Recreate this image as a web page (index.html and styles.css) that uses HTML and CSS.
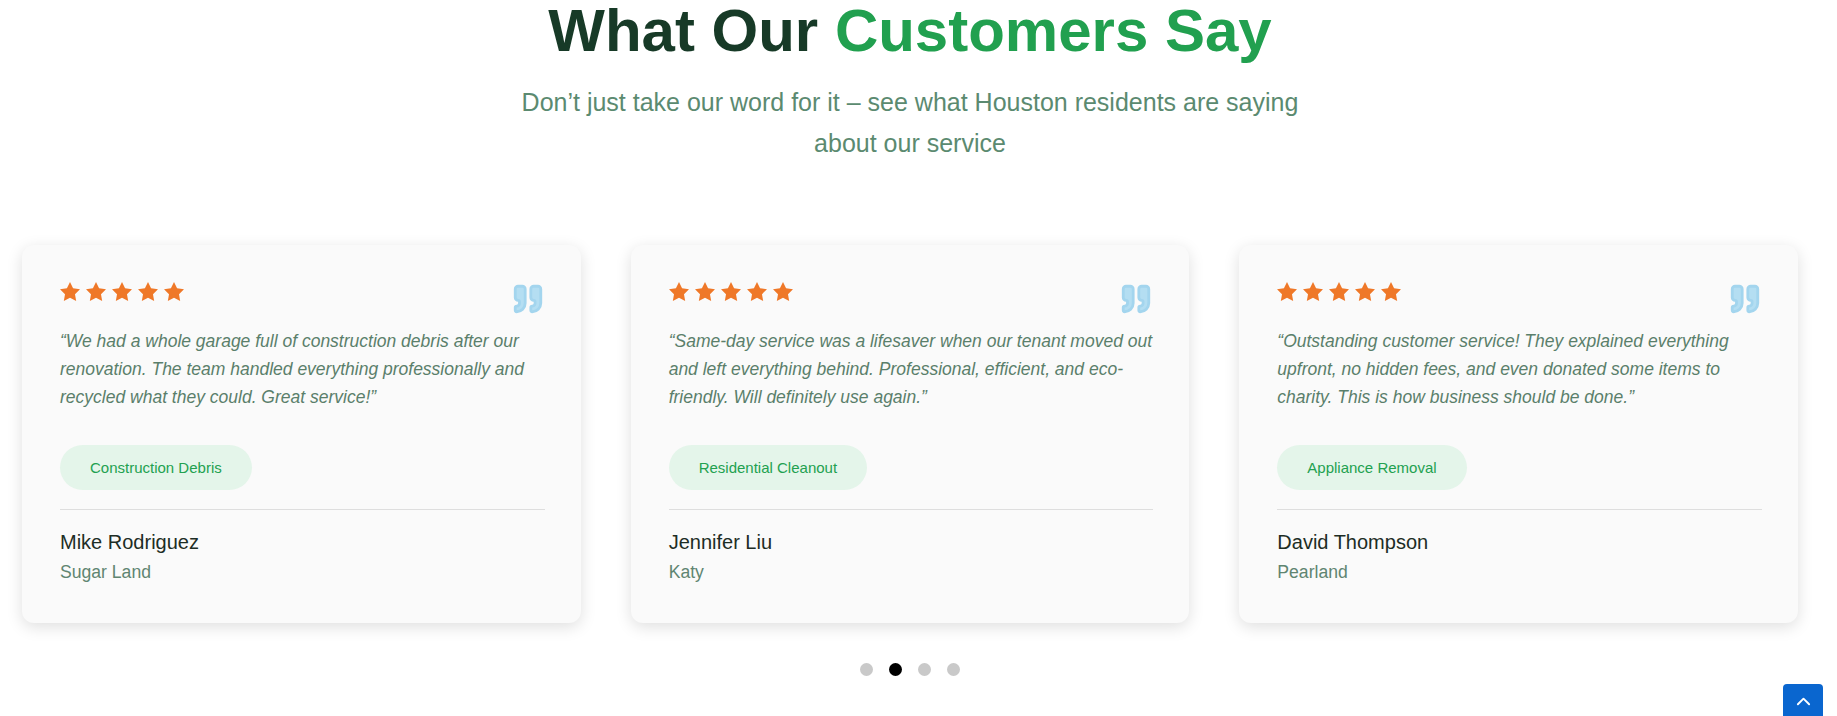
FILE: index.html
```html
<!DOCTYPE html>
<html lang="en">
<head>
<meta charset="utf-8">
<title>What Our Customers Say</title>
<link rel="stylesheet" href="styles.css">
</head>
<body>
<section class="testimonials">
  <header class="section-head">
    <h2 class="title">What Our <span class="accent">Customers Say</span></h2>
    <p class="subtitle">Don’t just take our word for it – see what Houston residents are saying about our service</p>
  </header>

  <div class="slider">
    <article class="card">
      <div class="card-head">
        <div class="stars">
          <svg class="star" viewBox="2 2 20 19.02"><polygon points="12 2 15.09 8.26 22 9.27 17 14.14 18.18 21.02 12 17.77 5.82 21.02 7 14.14 2 9.27 8.91 8.26"/></svg>
          <svg class="star" viewBox="2 2 20 19.02"><polygon points="12 2 15.09 8.26 22 9.27 17 14.14 18.18 21.02 12 17.77 5.82 21.02 7 14.14 2 9.27 8.91 8.26"/></svg>
          <svg class="star" viewBox="2 2 20 19.02"><polygon points="12 2 15.09 8.26 22 9.27 17 14.14 18.18 21.02 12 17.77 5.82 21.02 7 14.14 2 9.27 8.91 8.26"/></svg>
          <svg class="star" viewBox="2 2 20 19.02"><polygon points="12 2 15.09 8.26 22 9.27 17 14.14 18.18 21.02 12 17.77 5.82 21.02 7 14.14 2 9.27 8.91 8.26"/></svg>
          <svg class="star" viewBox="2 2 20 19.02"><polygon points="12 2 15.09 8.26 22 9.27 17 14.14 18.18 21.02 12 17.77 5.82 21.02 7 14.14 2 9.27 8.91 8.26"/></svg>
        </div>
        <svg class="quote-icon" viewBox="0 0 24 24"><path d="M16 3a2 2 0 0 0-2 2v6a2 2 0 0 0 2 2 1 1 0 0 1 1 1v1a2 2 0 0 1-2 2 1 1 0 0 0-1 1v2a1 1 0 0 0 1 1 6 6 0 0 0 6-6V5a2 2 0 0 0-2-2z"/><path d="M5 3a2 2 0 0 0-2 2v6a2 2 0 0 0 2 2 1 1 0 0 1 1 1v1a2 2 0 0 1-2 2 1 1 0 0 0-1 1v2a1 1 0 0 0 1 1 6 6 0 0 0 6-6V5a2 2 0 0 0-2-2z"/></svg>
      </div>
      <p class="quote">“We had a whole garage full of construction debris after our renovation. The team handled everything professionally and recycled what they could. Great service!”</p>
      <span class="tag">Construction Debris</span>
      <div class="author">
        <div class="name">Mike Rodriguez</div>
        <div class="place">Sugar Land</div>
      </div>
    </article>

    <article class="card">
      <div class="card-head">
        <div class="stars">
          <svg class="star" viewBox="2 2 20 19.02"><polygon points="12 2 15.09 8.26 22 9.27 17 14.14 18.18 21.02 12 17.77 5.82 21.02 7 14.14 2 9.27 8.91 8.26"/></svg>
          <svg class="star" viewBox="2 2 20 19.02"><polygon points="12 2 15.09 8.26 22 9.27 17 14.14 18.18 21.02 12 17.77 5.82 21.02 7 14.14 2 9.27 8.91 8.26"/></svg>
          <svg class="star" viewBox="2 2 20 19.02"><polygon points="12 2 15.09 8.26 22 9.27 17 14.14 18.18 21.02 12 17.77 5.82 21.02 7 14.14 2 9.27 8.91 8.26"/></svg>
          <svg class="star" viewBox="2 2 20 19.02"><polygon points="12 2 15.09 8.26 22 9.27 17 14.14 18.18 21.02 12 17.77 5.82 21.02 7 14.14 2 9.27 8.91 8.26"/></svg>
          <svg class="star" viewBox="2 2 20 19.02"><polygon points="12 2 15.09 8.26 22 9.27 17 14.14 18.18 21.02 12 17.77 5.82 21.02 7 14.14 2 9.27 8.91 8.26"/></svg>
        </div>
        <svg class="quote-icon" viewBox="0 0 24 24"><path d="M16 3a2 2 0 0 0-2 2v6a2 2 0 0 0 2 2 1 1 0 0 1 1 1v1a2 2 0 0 1-2 2 1 1 0 0 0-1 1v2a1 1 0 0 0 1 1 6 6 0 0 0 6-6V5a2 2 0 0 0-2-2z"/><path d="M5 3a2 2 0 0 0-2 2v6a2 2 0 0 0 2 2 1 1 0 0 1 1 1v1a2 2 0 0 1-2 2 1 1 0 0 0-1 1v2a1 1 0 0 0 1 1 6 6 0 0 0 6-6V5a2 2 0 0 0-2-2z"/></svg>
      </div>
      <p class="quote">“Same-day service was a lifesaver when our tenant moved out and left everything behind. Professional, efficient, and eco-friendly. Will definitely use again.”</p>
      <span class="tag">Residential Cleanout</span>
      <div class="author">
        <div class="name">Jennifer Liu</div>
        <div class="place">Katy</div>
      </div>
    </article>

    <article class="card">
      <div class="card-head">
        <div class="stars">
          <svg class="star" viewBox="2 2 20 19.02"><polygon points="12 2 15.09 8.26 22 9.27 17 14.14 18.18 21.02 12 17.77 5.82 21.02 7 14.14 2 9.27 8.91 8.26"/></svg>
          <svg class="star" viewBox="2 2 20 19.02"><polygon points="12 2 15.09 8.26 22 9.27 17 14.14 18.18 21.02 12 17.77 5.82 21.02 7 14.14 2 9.27 8.91 8.26"/></svg>
          <svg class="star" viewBox="2 2 20 19.02"><polygon points="12 2 15.09 8.26 22 9.27 17 14.14 18.18 21.02 12 17.77 5.82 21.02 7 14.14 2 9.27 8.91 8.26"/></svg>
          <svg class="star" viewBox="2 2 20 19.02"><polygon points="12 2 15.09 8.26 22 9.27 17 14.14 18.18 21.02 12 17.77 5.82 21.02 7 14.14 2 9.27 8.91 8.26"/></svg>
          <svg class="star" viewBox="2 2 20 19.02"><polygon points="12 2 15.09 8.26 22 9.27 17 14.14 18.18 21.02 12 17.77 5.82 21.02 7 14.14 2 9.27 8.91 8.26"/></svg>
        </div>
        <svg class="quote-icon" viewBox="0 0 24 24"><path d="M16 3a2 2 0 0 0-2 2v6a2 2 0 0 0 2 2 1 1 0 0 1 1 1v1a2 2 0 0 1-2 2 1 1 0 0 0-1 1v2a1 1 0 0 0 1 1 6 6 0 0 0 6-6V5a2 2 0 0 0-2-2z"/><path d="M5 3a2 2 0 0 0-2 2v6a2 2 0 0 0 2 2 1 1 0 0 1 1 1v1a2 2 0 0 1-2 2 1 1 0 0 0-1 1v2a1 1 0 0 0 1 1 6 6 0 0 0 6-6V5a2 2 0 0 0-2-2z"/></svg>
      </div>
      <p class="quote">“Outstanding customer service! They explained everything upfront, no hidden fees, and even donated some items to charity. This is how business should be done.”</p>
      <span class="tag">Appliance Removal</span>
      <div class="author">
        <div class="name">David Thompson</div>
        <div class="place">Pearland</div>
      </div>
    </article>
  </div>

  <div class="dots">
    <span class="dot"></span>
    <span class="dot active"></span>
    <span class="dot"></span>
    <span class="dot"></span>
  </div>
</section>

<a class="to-top" href="#" aria-label="Back to top">
  <svg viewBox="0 0 16 10"><polyline points="2 8.5 8 2.5 14 8.5"/></svg>
</a>
</body>
</html>
```

FILE: styles.css
```css
* {
  box-sizing: border-box;
}

html, body {
  margin: 0;
  padding: 0;
  background: #ffffff;
  font-family: "Liberation Sans", Arial, sans-serif;
  overflow: hidden;
}

.testimonials {
  width: 1820px;
}

.section-head {
  text-align: center;
}

.title {
  margin: 1px 0 0;
  font-size: 60px;
  line-height: 1;
  font-weight: 700;
  color: #173a27;
}

.accent {
  color: #21a04f;
}

.subtitle {
  max-width: 800px;
  margin: 21px auto 0;
  font-size: 25px;
  line-height: 41px;
  color: #5b8a70;
}

.slider {
  margin-top: 81px;
  padding: 0 22px;
  display: grid;
  grid-template-columns: repeat(3, 1fr);
  gap: 50px;
}

.card {
  background: #fafafa;
  border-radius: 12px;
  box-shadow: 0 4px 16px rgba(0, 0, 0, 0.13);
  padding: 37px 36px 41px 38px;
  display: flex;
  flex-direction: column;
  align-items: flex-start;
}

.card-head {
  align-self: stretch;
  display: flex;
  justify-content: space-between;
  align-items: flex-start;
  margin-bottom: 11px;
}

.stars {
  display: flex;
  gap: 6px;
}

.star {
  width: 20px;
  height: 19px;
  fill: #ef7828;
}

.quote-icon {
  width: 34px;
  height: 34px;
  fill: #b4def2;
  stroke: #a3d5ee;
  stroke-width: 2;
  stroke-linecap: round;
  stroke-linejoin: round;
}

.quote {
  margin: 0 0 34px;
  font-size: 17.5px;
  line-height: 28.16px;
  font-style: italic;
  color: #5a7f6b;
}

.tag {
  display: inline-block;
  padding: 12px 30px;
  border-radius: 999px;
  background: #e4f5ea;
  color: #22a150;
  font-size: 15px;
  line-height: 21px;
}

.author {
  align-self: stretch;
  margin-top: 19px;
  padding-top: 20px;
  border-top: 1px solid #dedede;
}

.name {
  font-size: 20px;
  line-height: 24px;
  color: #1d2d25;
  margin-bottom: 8px;
}

.place {
  font-size: 17.6px;
  line-height: 20px;
  color: #5f8571;
}

.dots {
  margin-top: 40px;
  display: flex;
  justify-content: center;
  gap: 16px;
}

.dot {
  width: 13px;
  height: 13px;
  border-radius: 50%;
  background: #c9c9c9;
}

.dot.active {
  background: #000000;
}

.to-top {
  position: fixed;
  right: 14px;
  bottom: -8px;
  width: 40px;
  height: 40px;
  border-radius: 4px;
  background: #0a66cf;
  display: flex;
  justify-content: center;
  padding-top: 12px;
}

.to-top svg {
  width: 15px;
  height: 10px;
  fill: none;
  stroke: #ffffff;
  stroke-width: 2;
  stroke-linecap: round;
  stroke-linejoin: round;
}
```
